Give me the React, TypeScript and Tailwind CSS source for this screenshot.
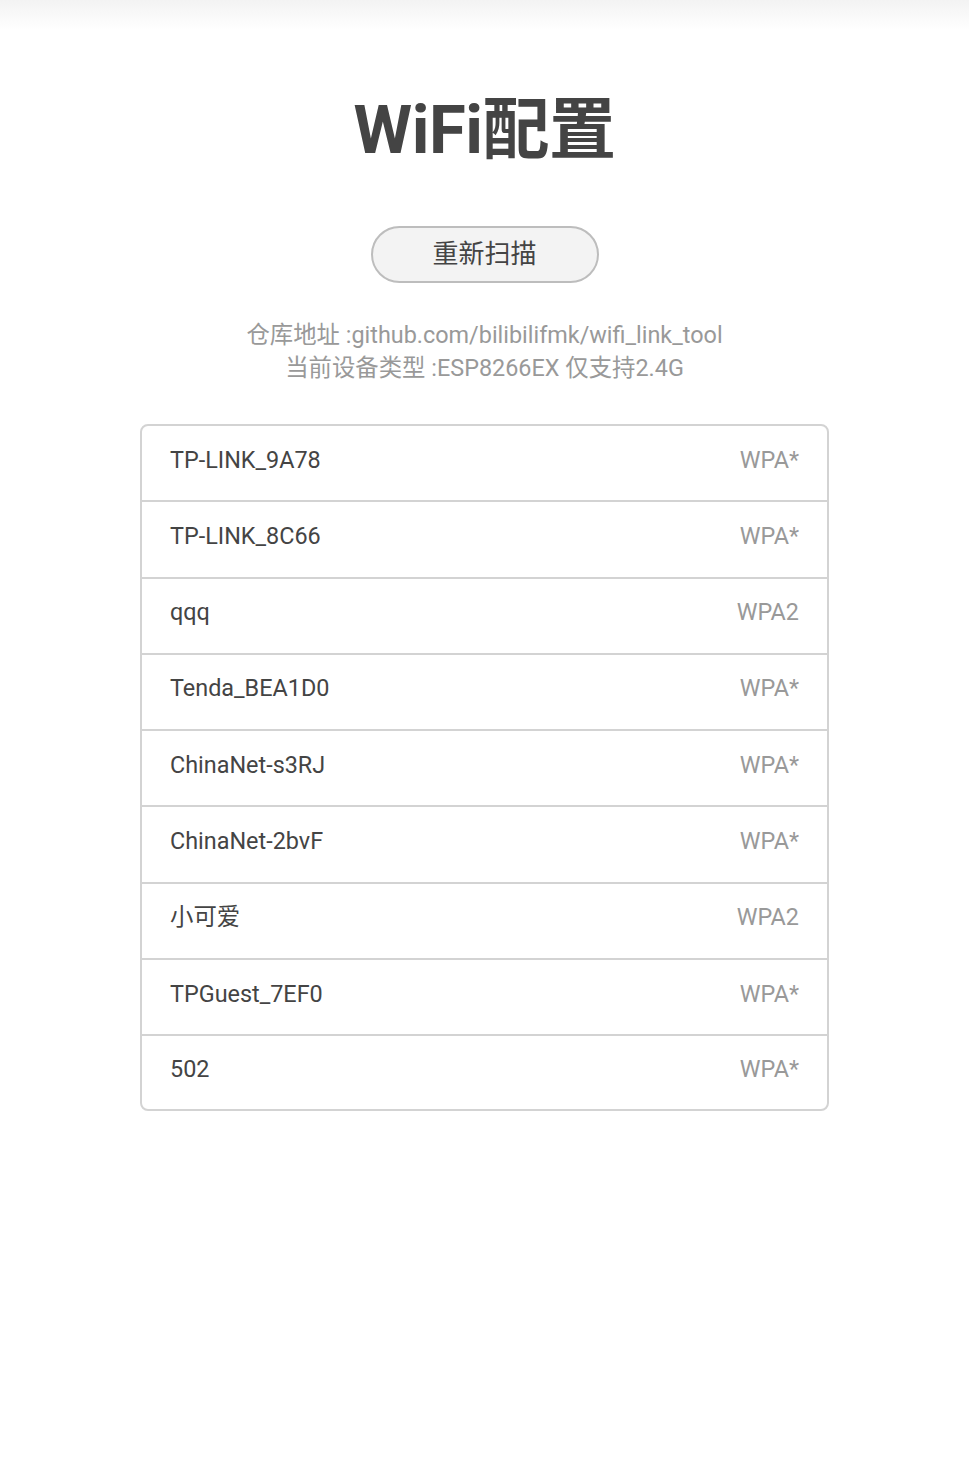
const networks = [
  { ssid: 'TP-LINK_9A78', enc: 'WPA*' },
  { ssid: 'TP-LINK_8C66', enc: 'WPA*' },
  { ssid: 'qqq', enc: 'WPA2' },
  { ssid: 'Tenda_BEA1D0', enc: 'WPA*' },
  { ssid: 'ChinaNet-s3RJ', enc: 'WPA*' },
  { ssid: 'ChinaNet-2bvF', enc: 'WPA*' },
  { ssid: '小可爱', enc: 'WPA2' },
  { ssid: 'TPGuest_7EF0', enc: 'WPA*' },
  { ssid: '502', enc: 'WPA*' }
]

export default function App() {
  return (
    <div
      className="min-h-screen w-full bg-white pr-[5px] pb-[40px] text-[#444]"
      style={{ fontFamily: 'Roboto, "Noto Sans CJK SC", sans-serif' }}
    >
      <div className="h-[30px] bg-gradient-to-b from-[#f3f3f3] to-white" />

      <h1 className="mt-[60px] text-center text-[67px] font-bold leading-[80px] text-[#444] tracking-[-0.5px]">
        WiFi配置
      </h1>

      <div className="mt-[56px] flex justify-center">
        <button className="h-[57px] w-[228px] rounded-full border-2 border-[#bdbdbd] bg-[#f3f3f3] text-[26px] text-[#444]">
          重新扫描
        </button>
      </div>

      <div className="mt-[36px] text-center text-[23.4px] leading-[33px] text-[#999]">
        <p>仓库地址 :github.com/bilibilifmk/wifi_link_tool</p>
        <p>当前设备类型 :ESP8266EX 仅支持2.4G</p>
      </div>

      <ul className="mx-auto mt-[39px] w-[689px] rounded-[8px] border-2 border-[#d3d3d3]">
        {networks.map((n, i) => (
          <li
            key={n.ssid}
            className={`flex items-center justify-between px-[28px] pb-[6px] text-[23.4px] ${
              i < networks.length - 1 ? 'h-[76.3px] border-b-2 border-[#d3d3d3]' : 'h-[73px]'
            }`}
          >
            <span className="text-[#444]">{n.ssid}</span>
            <span className="text-[#999]">{n.enc}</span>
          </li>
        ))}
      </ul>
    </div>
  )
}
